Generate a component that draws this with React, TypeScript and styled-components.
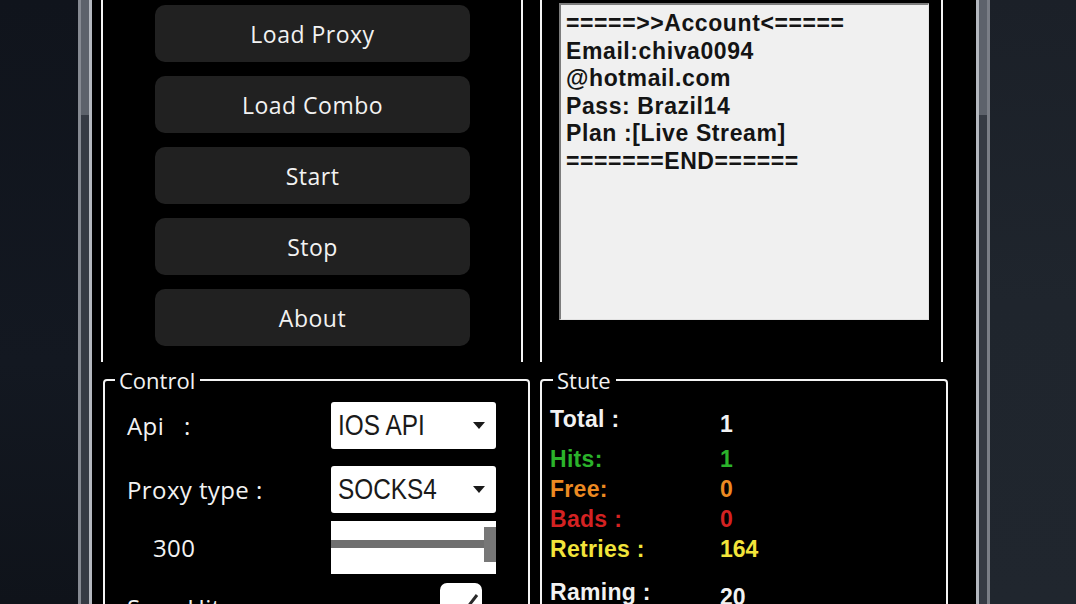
import styled, { createGlobalStyle } from 'styled-components';

const GlobalStyle = createGlobalStyle`
  html, body {
    margin: 0;
    padding: 0;
  }
  body {
    width: 1076px;
    height: 604px;
    overflow: hidden;
    background: #161a22;
    font-family: "Open Sans", "Noto Sans", sans-serif;
  }
`;

const buttons = ['Load Proxy', 'Load Combo', 'Start', 'Stop', 'About'];

const resultLines = [
  '=====>>Account<=====',
  'Email:chiva0094',
  '@hotmail.com',
  'Pass: Brazil14',
  'Plan :[Live Stream]',
  '=======END======',
];

const stats = [
  { label: 'Total :', value: '1', color: '#f2f2f2', top: 0, height: 40, valueTop: 8 },
  { label: 'Hits:', value: '1', color: '#2bb32b', top: 0, height: 30, valueTop: 3 },
  { label: 'Free:', value: '0', color: '#ec8a22', top: 0, height: 30, valueTop: 3 },
  { label: 'Bads :', value: '0', color: '#d42222', top: 0, height: 30, valueTop: 3 },
  { label: 'Retries :', value: '164', color: '#f2e43a', top: 0, height: 30, valueTop: 3 },
  { label: 'Raming :', value: '20', color: '#f2f2f2', top: 13, height: 30, valueTop: 8 },
];

const Arrow = () => (
  <svg width="12" height="7" viewBox="0 0 12 7">
    <path d="M0 0 L12 0 L6 7 Z" fill="#1a1a1a" />
  </svg>
);

const App = () => {
  return (
    <>
      <GlobalStyle />
      <Screen>
        <Backdrop $side="left" />
        <Window>
          <FrameEdge $side="left" />
          <Inner>
            <TopRow>
              <OpenGroup $width={422}>
                <ButtonStack>
                  {buttons.map((b) => (
                    <DarkButton key={b}>{b}</DarkButton>
                  ))}
                </ButtonStack>
              </OpenGroup>
              <OpenGroup $width={403}>
                <ResultBox>
                  {resultLines.map((l, i) => (
                    <ResultLine key={i}>{l}</ResultLine>
                  ))}
                </ResultBox>
              </OpenGroup>
            </TopRow>
            <BottomRow>
              <GroupBox $width={427}>
                <Legend $left={10}>Control</Legend>
                <ControlBody>
                  <ControlRow $top={0}>
                    <FieldLabel>Api&nbsp;&nbsp;&nbsp;:</FieldLabel>
                    <Select>
                      <SelectText>IOS API</SelectText>
                      <Arrow />
                    </Select>
                  </ControlRow>
                  <ControlRow $top={17}>
                    <FieldLabel>Proxy type :</FieldLabel>
                    <Select>
                      <SelectText>SOCKS4</SelectText>
                      <Arrow />
                    </Select>
                  </ControlRow>
                  <ControlRow $top={8}>
                    <FieldLabel $indent={26}>300</FieldLabel>
                    <SliderBox>
                      <SliderTrack />
                      <SliderThumb />
                    </SliderBox>
                  </ControlRow>
                  <ControlRow $top={9} $alignTop>
                    <FieldLabel $offset={13}>Save Hits</FieldLabel>
                    <CheckCell>
                      <CheckBox>
                        <svg width="42" height="42" viewBox="0 0 42 42">
                          <path d="M11 25 L20 34 L37 12" fill="none" stroke="#2a2a2a" strokeWidth="3" />
                        </svg>
                      </CheckBox>
                    </CheckCell>
                  </ControlRow>
                </ControlBody>
              </GroupBox>
              <GroupBox $width={408}>
                <Legend $left={11}>Stute</Legend>
                <StatsBody>
                  {stats.map((s) => (
                    <StatRow key={s.label} $color={s.color} $top={s.top} $height={s.height}>
                      <StatLabel>{s.label}</StatLabel>
                      <StatValue $top={s.valueTop}>{s.value}</StatValue>
                    </StatRow>
                  ))}
                </StatsBody>
              </GroupBox>
            </BottomRow>
          </Inner>
          <FrameEdge $side="right" />
        </Window>
        <Backdrop $side="right" />
      </Screen>
    </>
  );
};

export default App;

const Screen = styled.div`
  display: flex;
  width: 1076px;
  height: 604px;
  overflow: hidden;
`;

const Backdrop = styled.div<{ $side: 'left' | 'right' }>`
  flex: ${(p) => (p.$side === 'left' ? '0 0 78px' : '1')};
  background: ${(p) =>
    p.$side === 'left'
      ? 'linear-gradient(to bottom, #10141c 0%, #131821 60%, #0f131a 100%)'
      : 'linear-gradient(to bottom, #1b2028 0%, #1f252d 50%, #20262e 100%)'};
`;

const Window = styled.div`
  display: flex;
  width: 912px;
  height: 604px;
`;

const FrameEdge = styled.div<{ $side: 'left' | 'right' }>`
  flex: 0 0 14px;
  background: ${(p) =>
    p.$side === 'left'
      ? 'linear-gradient(to right, #868a92 0 3px, transparent 3px 11px, #b4b8bf 11px 14px)'
      : 'linear-gradient(to right, #b4b8bf 0 3px, transparent 3px 11px, #7a7e86 11px 14px)'},
    linear-gradient(to bottom, #5d626b 0 115px, #363b44 115px);
`;

const Inner = styled.div`
  flex: 1;
  background: #000;
  display: flex;
  flex-direction: column;
  overflow: hidden;
`;

const TopRow = styled.div`
  display: flex;
  height: 362px;
  padding-left: 9px;
  gap: 17px;
  flex-shrink: 0;
`;

const OpenGroup = styled.div<{ $width: number }>`
  width: ${(p) => p.$width}px;
  box-sizing: border-box;
  border-left: 2px solid #f4f4f4;
  border-right: 2px solid #f4f4f4;
  height: 100%;
`;

const ButtonStack = styled.div`
  display: flex;
  flex-direction: column;
  gap: 14px;
  padding: 5px 0 0 52px;
`;

const DarkButton = styled.div`
  width: 315px;
  height: 57px;
  border-radius: 10px;
  background: #212121;
  color: #f2f2f2;
  font-family: "Open Sans", "Noto Sans", sans-serif;
  font-size: 23px;
  letter-spacing: 0.5px;
  display: flex;
  align-items: center;
  justify-content: center;
`;

const ResultBox = styled.div`
  margin: 3px 0 0 17px;
  width: 370px;
  height: 317px;
  box-sizing: border-box;
  background: #f0f0f0;
  border-top: 2px solid #7d7d7d;
  border-left: 2px solid #7d7d7d;
  border-right: 1px solid #e2e2e2;
  border-bottom: 1px solid #e2e2e2;
  padding: 5px 0 0 5px;
`;

const ResultLine = styled.div`
  font-family: "Liberation Sans", Arial, sans-serif;
  font-weight: 700;
  font-size: 23px;
  letter-spacing: 0.6px;
  line-height: 27.6px;
  color: #141414;
  white-space: pre;
`;

const BottomRow = styled.div`
  display: flex;
  gap: 10px;
  padding-left: 11px;
  margin-top: 6px;
  height: 260px;
  flex-shrink: 0;
`;

const GroupBox = styled.fieldset<{ $width: number }>`
  width: ${(p) => p.$width}px;
  box-sizing: border-box;
  margin: 0;
  padding: 0;
  border: 2px solid #f4f4f4;
  border-radius: 4px;
  min-width: 0;
`;

const Legend = styled.legend<{ $left: number }>`
  margin-left: ${(p) => p.$left}px;
  padding: 0 5px 0 4px;
  color: #f2f2f2;
  font-family: "Open Sans", "Noto Sans", sans-serif;
  font-size: 22px;
  line-height: 24px;
`;

const ControlBody = styled.div`
  padding: 10px 0 0 22px;
  display: flex;
  flex-direction: column;
`;

const ControlRow = styled.div<{ $top: number; $alignTop?: boolean }>`
  display: grid;
  grid-template-columns: 204px 165px;
  align-items: ${(p) => (p.$alignTop ? 'start' : 'center')};
  margin-top: ${(p) => p.$top}px;
`;

const FieldLabel = styled.div<{ $indent?: number; $offset?: number }>`
  color: #f2f2f2;
  font-family: "Open Sans", "Noto Sans", sans-serif;
  font-size: 24px;
  line-height: 24px;
  letter-spacing: 0.4px;
  padding-left: ${(p) => p.$indent ?? 0}px;
  margin-top: ${(p) => p.$offset ?? 0}px;
  white-space: pre;
`;

const Select = styled.div`
  height: 47px;
  background: #fff;
  border-radius: 3px;
  display: flex;
  align-items: center;
  justify-content: space-between;
  padding: 0 11px 0 7px;
  box-sizing: border-box;
`;

const SelectText = styled.span`
  display: inline-block;
  font-family: "Liberation Sans Narrow", "Liberation Sans", sans-serif;
  font-size: 29px;
  color: #1a1a1a;
  transform: scaleX(0.84);
  transform-origin: left center;
`;

const SliderBox = styled.div`
  height: 53px;
  background: #fff;
  display: flex;
  align-items: flex-start;
`;

const SliderTrack = styled.div`
  flex: 1;
  height: 8px;
  margin-top: 19px;
  background: #6f6f6f;
`;

const SliderThumb = styled.div`
  width: 12px;
  height: 35px;
  margin: 6px 0 0 -4px;
  background: #777;
`;

const CheckCell = styled.div`
  display: flex;
  justify-content: flex-end;
  padding-right: 14px;
`;

const CheckBox = styled.div`
  width: 42px;
  height: 42px;
  background: #fff;
  border-radius: 7px;
  display: flex;
`;

const StatsBody = styled.div`
  padding: 12px 0 0 8px;
  display: flex;
  flex-direction: column;
`;

const StatRow = styled.div<{ $color: string; $top: number; $height: number }>`
  display: flex;
  align-items: flex-start;
  height: ${(p) => p.$height}px;
  margin-top: ${(p) => p.$top}px;
  color: ${(p) => p.$color};
  font-family: "Liberation Sans", Arial, sans-serif;
  font-weight: 700;
  font-size: 23px;
  line-height: 24px;
`;

const StatLabel = styled.div`
  width: 170px;
  padding-top: 3px;
  letter-spacing: 0.3px;
`;

const StatValue = styled.div<{ $top: number }>`
  margin-top: ${(p) => p.$top}px;
`;
